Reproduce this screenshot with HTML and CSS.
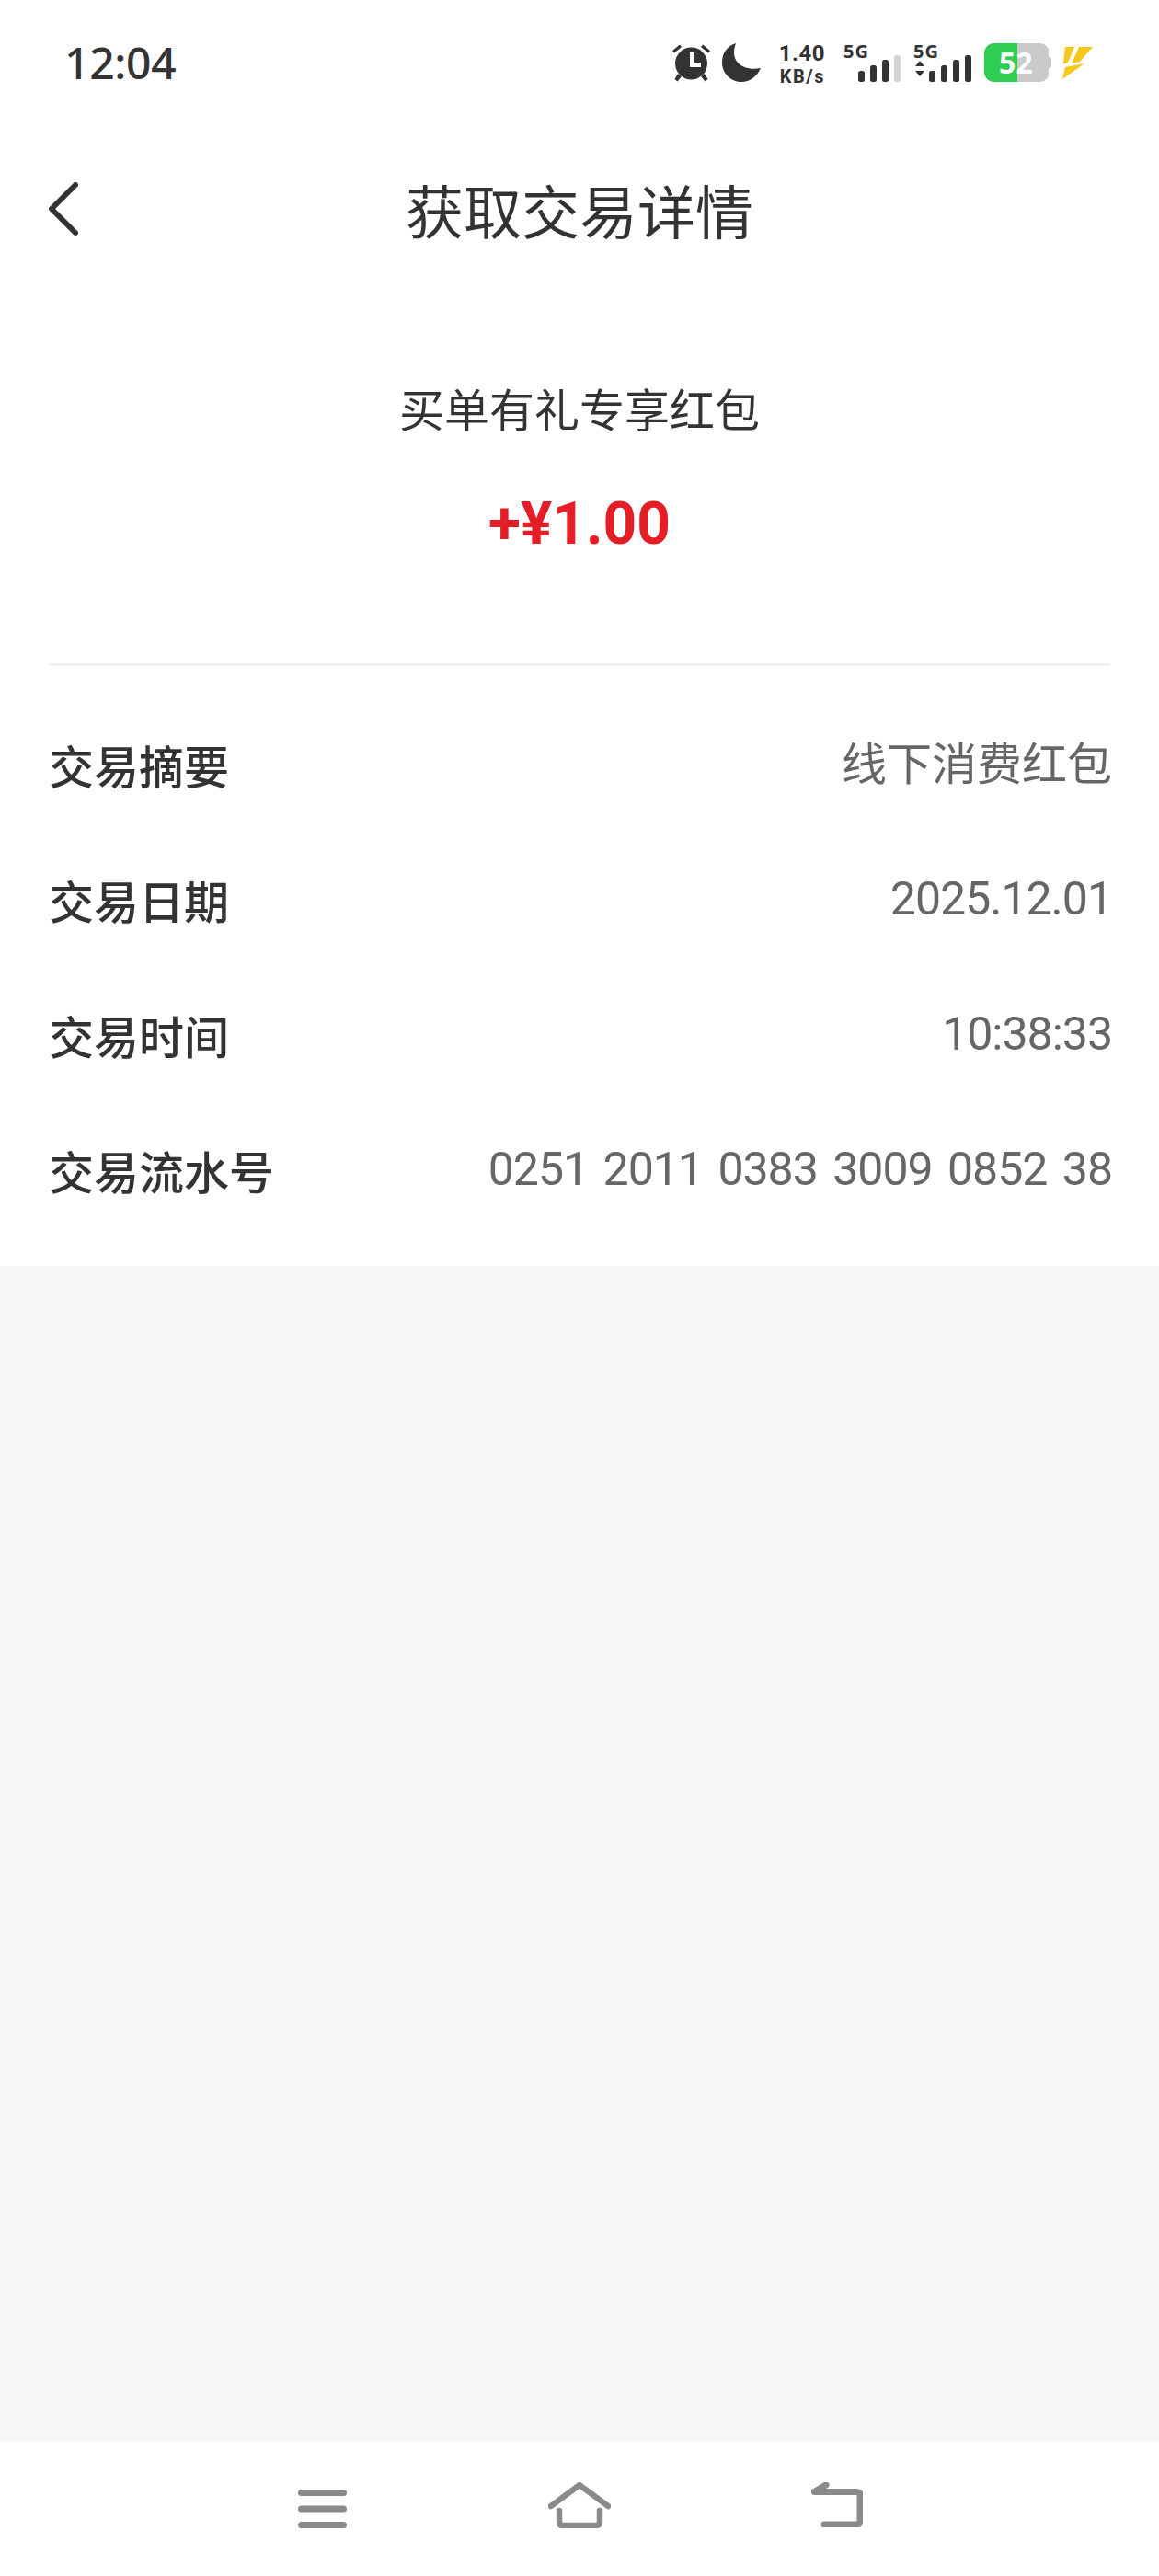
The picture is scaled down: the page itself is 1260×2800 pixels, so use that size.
FILE: index.html
```html
<!DOCTYPE html>
<html lang="zh-CN">
<head>
<meta charset="utf-8">
<title>获取交易详情</title>
<link rel="stylesheet" href="styles.css">
</head>
<body>
<div class="page">
  <div class="top">
    <div class="status">
      <span class="clock">12:04</span>
      <div class="status-icons">
        <svg class="ic-alarm" viewBox="0 0 44 42" width="44" height="42"><g fill="#333"><circle cx="21.500" cy="22" r="17.500"/><path d="M1 8 9 1.500 11 4 3 10.500ZM42 8 34 1.500 32 4 40 10.500Z"/><path d="M7 33 11 36 6.500 41.500 3.500 39ZM36 33 32 36 36.500 41.500 39.500 39Z"/></g><path d="M20 10h5V21h7v5H20Z" fill="#fff"/></svg>
        <svg class="ic-moon" viewBox="0 0 42 42" width="42" height="42"><path fill="#333" d="M15 0C12 8 12 15 17 21c5 6 15 8 25 6-4 9-12 15-21 15C9 42 0 32 0 21 0 10 6 3 15 0Z"/></svg>
        <div class="speed"><span class="speed-num">1.40</span><span class="speed-unit">KB/s</span></div>
        <div class="signal signal-first">
          <span class="net">5G</span>
          <svg viewBox="0 0 47 30" width="47" height="30"><g fill="#333"><rect x="0" y="17" width="7" height="12" rx="2.500"/><rect x="13" y="11" width="7" height="18" rx="2.500"/><rect x="26" y="5" width="7" height="24" rx="2.500"/></g><rect x="39" y="0" width="7" height="29" rx="2.500" fill="#d4d4d4"/></svg>
        </div>
        <div class="signal">
          <span class="net">5G</span>
          <svg viewBox="0 0 64 30" width="64" height="30"><g fill="#333"><path d="M2 12 7 6 12 12ZM2 17H12L7 23Z"/><rect x="17" y="17" width="7" height="12" rx="2.500"/><rect x="30" y="11" width="7" height="18" rx="2.500"/><rect x="43" y="5" width="7" height="24" rx="2.500"/><rect x="56" y="0" width="7" height="29" rx="2.500"/></g></svg>
        </div>
        <div class="battery"><div class="battery-fill"></div><span class="battery-num">52</span><span class="battery-tip"></span></div>
        <svg class="ic-bolt" viewBox="0 0 34 35" width="34" height="35"><path fill="#f6c71c" d="M3 0H13L6 17 1 19ZM18 0H33L19 16 10 18ZM3 22 24 18 0 35Z"/></svg>
      </div>
    </div>
    <header class="nav">
      <svg class="back" viewBox="0 0 32 58" width="32" height="58"><path d="M29 3 3 29 29 55" fill="none" stroke="#333" stroke-width="6" stroke-linecap="round" stroke-linejoin="round"/></svg>
      <h1 class="title">获取交易详情</h1>
    </header>
  </div>

  <main class="content">
    <section class="summary">
      <div class="summary-name">买单有礼专享红包</div>
      <div class="summary-amount">+¥1.00</div>
    </section>
    <section class="rows">
      <div class="row"><span class="label">交易摘要</span><span class="value value-text">线下消费红包</span></div>
      <div class="row"><span class="label">交易日期</span><span class="value">2025.12.01</span></div>
      <div class="row"><span class="label">交易时间</span><span class="value">10:38:33</span></div>
      <div class="row"><span class="label">交易流水号</span><span class="value">0251 2011 0383 3009 0852 38</span></div>
    </section>
  </main>

  <div class="spacer"></div>

  <nav class="softkeys">
    <svg viewBox="0 0 53 42" width="53" height="42"><g fill="#8a8a8a"><rect y="0" width="53" height="7" rx="3.500"/><rect y="17.500" width="53" height="7" rx="3.500"/><rect y="35" width="53" height="7" rx="3.500"/></g></svg>
    <svg viewBox="0 0 68 50" width="68" height="50"><path d="M3 26 34 3 65 26M12 31V43Q12 47 16 47H52Q56 47 56 43V31" fill="none" stroke="#8a8a8a" stroke-width="6.500" stroke-linecap="round" stroke-linejoin="round"/></svg>
    <svg viewBox="0 0 56 49" width="56" height="49"><path d="M16 3 3 10.500H49Q53 10.500 53 14V42Q53 46 49 46H14" fill="none" stroke="#8a8a8a" stroke-width="7" stroke-linecap="round" stroke-linejoin="round"/></svg>
  </nav>
</div>
</body>
</html>
```

FILE: styles.css
```css
* { box-sizing: border-box; }
html, body { margin: 0; padding: 0; background: #fff; }
body { font-family: "Noto Sans", "Noto Sans CJK SC", "Liberation Sans", sans-serif; color: #333; }
.page { width: 1260px; height: 2800px; display: flex; flex-direction: column; background: #f6f6f6; }
.top { background: #fff; height: 325px; flex: none; }

.status { height: 135px; padding: 47px 71px 0 70px; display: flex; justify-content: space-between; align-items: flex-start; }
.clock { font-size: 48px; font-weight: 500; line-height: 42px; color: #333; letter-spacing: -0.3px; }
.status-icons { display: flex; align-items: flex-start; }
.ic-alarm { margin-right: 11px; display: block; }
.ic-moon { margin-right: 19px; display: block; }
.speed { width: 51px; margin-right: 20px; display: flex; flex-direction: column; align-items: flex-end; font-family: Roboto, sans-serif; font-weight: 700; color: #333; }
.speed-num { font-size: 24px; line-height: 22px; letter-spacing: 0.5px; }
.speed-unit { font-size: 20px; line-height: 20px; margin-top: 4px; letter-spacing: 1.500px; }
.signal { display: flex; flex-direction: column; width: 64px; margin-right: 13px; padding-top: 3px; }
.signal-first { width: 63px; }
.signal svg { display: block; margin-top: -2px; align-self: flex-end; }
.net { font-size: 20px; font-weight: 700; line-height: 12px; height: 12px; color: #333; letter-spacing: 1px; }
.battery { position: relative; width: 70px; height: 42px; margin-right: 15px; background: #cacaca; border-radius: 11px 9px 9px 11px; }
.battery-fill { position: absolute; left: 0; top: 0; bottom: 0; width: 36px; background: #2fce52; border-radius: 11px 0 0 11px; }
.battery-num { position: absolute; left: 16px; top: 0; font-size: 32px; line-height: 42px; font-weight: 700; color: #fff; }
.battery-tip { position: absolute; right: -3px; top: 15px; width: 3px; height: 12px; background: #cacaca; border-radius: 0 2px 2px 0; }
.ic-bolt { display: block; margin-top: 4px; }

.nav { position: relative; height: 190px; display: flex; align-items: center; justify-content: center; padding-bottom: 6px; }
.title { margin: 0; font-size: 63px; font-weight: 400; line-height: 80px; color: #333; font-family: "Noto Sans CJK SC", sans-serif; }
.back { position: absolute; left: 53px; top: 63px; }

.content { background: #fff; height: 1051px; flex: none; }
.summary { height: 399px; margin: 0 53px; border-bottom: 3px solid #f2f2f2; display: flex; flex-direction: column; align-items: center; }
.summary-name { font-family: "Noto Sans CJK SC", sans-serif; font-size: 49px; line-height: 60px; margin-top: 88px; color: #333; }
.summary-amount { font-family: Roboto, sans-serif; font-size: 64px; font-weight: 700; line-height: 80px; margin-top: 57px; color: #e31e26; }
.rows { padding: 33px 51px 0 53px; }
.row { height: 147px; display: flex; align-items: center; justify-content: space-between; }
.label { font-family: "Noto Sans CJK SC", sans-serif; font-size: 49px; font-weight: 500; color: #333; }
.value { font-family: Roboto, sans-serif; font-size: 50px; letter-spacing: -1px; word-spacing: 5px; color: #666; padding-bottom: 1px; }
.value-text { font-family: "Noto Sans CJK SC", sans-serif; font-size: 49px; letter-spacing: 0; word-spacing: 0; padding-bottom: 8px; }

.spacer { flex: 1; }
.softkeys { height: 147px; flex: none; background: #fff; display: flex; align-items: flex-start; padding: 45px 0 0 324px; }
.softkeys svg { display: block; }
.softkeys svg:nth-child(1) { margin-top: 8px; margin-right: 219px; }
.softkeys svg:nth-child(2) { margin-right: 218px; }
```
